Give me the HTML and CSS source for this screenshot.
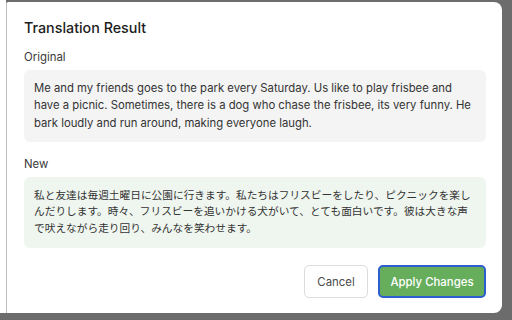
FILE: index.html
```html
<!DOCTYPE html>
<html>
<head lang="en">
    <meta charset="UTF-8">
    <title>Translation Result</title>
    <link rel="stylesheet" href="styles.css">
</head>
<body>
<div class="page">
    <div class="side"></div>
    <div class="modal">
        <h2 class="title">Translation Result</h2>
        <div class="label">Original</div>
        <div class="box box-orig">Me and my friends goes to the park every Saturday. Us like to play frisbee and have a picnic. Sometimes, there is a dog who chase the frisbee, its very funny. He bark loudly and run around, making everyone laugh.</div>
        <div class="label label-new">New</div>
        <div class="box box-new">私と友達は毎週土曜日に公園に行きます。私たちはフリスビーをしたり、ピクニックを楽しんだりします。時々、フリスビーを追いかける犬がいて、とても面白いです。彼は大きな声で吠えながら走り回り、みんなを笑わせます。</div>
        <div class="actions">
            <button class="btn btn-cancel">Cancel</button>
            <button class="btn btn-apply">Apply Changes</button>
        </div>
    </div>
</div>
</body>
</html>
```

FILE: styles.css
```css
*{
    margin: 0;
    padding: 0;
    box-sizing: border-box;
}
html,body{
    width: 100%;
    height: 100%;
}
body{
    background: #6c6c6c;
    overflow: hidden;
    font-family: Inter, "Noto Sans CJK JP", sans-serif;
    color: #333;
}
.page{
    display: flex;
    align-items: flex-start;
}
.side{
    width: 6px;
    height: 313px;
    background: #fff;
}
.modal{
    margin-top: 2px;
    width: 496px;
    height: 311px;
    background: #fff;
    border-left: 1px solid #bdbdbd;
    border-radius: 2px 8px 8px 0;
    padding: 16px 16px 0 17px;
}
.title{
    font-size: 14.3px;
    font-weight: 500;
    line-height: 20px;
    color: #1c1c1c;
}
.label{
    margin-top: 11px;
    font-size: 11.4px;
    line-height: 17px;
    color: #3a3a3a;
}
.label-new{
    margin-top: 14px;
}
.box{
    margin-top: 4px;
    padding: 10px;
    border-radius: 6px;
    font-size: 11.3px;
    line-height: 17.3px;
    color: #333;
}
.box-orig{
    background: #f4f4f4;
}
.box-new{
    background: #eff6ef;
    font-size: 10.7px;
    line-height: 16.5px;
    padding: 11px 10px;
}
.actions{
    display: flex;
    justify-content: flex-end;
    gap: 10px;
    margin-top: 17px;
}
.btn{
    height: 33px;
    border-radius: 5px;
    font-family: Inter, sans-serif;
    font-size: 11.4px;
}
.btn-cancel{
    width: 64px;
    background: #fff;
    border: 1px solid #dcdcdc;
    color: #4a4a4a;
}
.btn-apply{
    width: 108px;
    background: #66ad5c;
    border: 2px solid #2d5fd0;
    color: #fff;
    font-weight: 500;
}
```
